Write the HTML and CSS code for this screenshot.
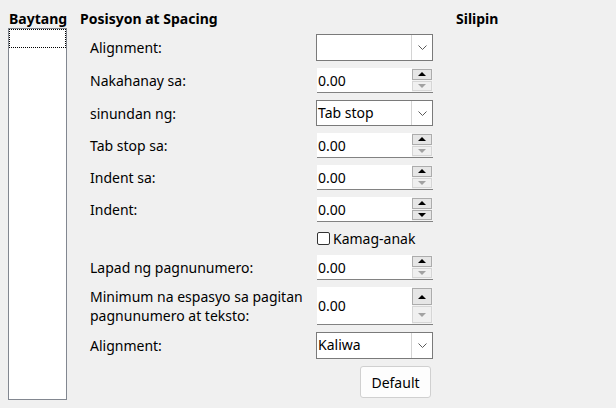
FILE: index.html
```html
<!DOCTYPE html>
<html>
<head>
<meta charset="utf-8">
<link rel="stylesheet" href="styles.css">
</head>
<body>
<div class="dialog">
  <div class="col-levels">
    <div class="head">Baytang</div>
    <div class="levels"><div class="level-focus"></div></div>
  </div>
  <div class="col-main">
    <div class="head">Posisyon at Spacing</div>
    <div class="form">
      <div class="label">Alignment:</div>
      <div class="combo h27"><span class="val"></span><span class="drop"><svg width="9" height="5" viewBox="0 0 9 5"><polyline points="0.5,0.5 4.5,4.5 8.5,0.5" fill="none" stroke="#5a5a5a" stroke-width="1"/></svg></span></div>

      <div class="label">Nakahanay sa:</div>
      <div class="spin"><span class="val">0.00</span><span class="btns"><span class="up"></span><span class="down off"></span></span></div>

      <div class="label">sinundan ng:</div>
      <div class="combo h26"><span class="val">Tab stop</span><span class="drop"><svg width="9" height="5" viewBox="0 0 9 5"><polyline points="0.5,0.5 4.5,4.5 8.5,0.5" fill="none" stroke="#5a5a5a" stroke-width="1"/></svg></span></div>

      <div class="label">Tab stop sa:</div>
      <div class="spin"><span class="val">0.00</span><span class="btns"><span class="up"></span><span class="down off"></span></span></div>

      <div class="label">Indent sa:</div>
      <div class="spin"><span class="val">0.00</span><span class="btns"><span class="up"></span><span class="down off"></span></span></div>

      <div class="label">Indent:</div>
      <div class="spin"><span class="val">0.00</span><span class="btns"><span class="up"></span><span class="down"></span></span></div>

      <div class="label"></div>
      <label class="check"><span class="box"></span>Kamag-anak</label>

      <div class="label">Lapad ng pagnunumero:</div>
      <div class="spin"><span class="val">0.00</span><span class="btns"><span class="up"></span><span class="down off"></span></span></div>

      <div class="label two">Minimum na espasyo sa pagitan<br>pagnunumero at teksto:</div>
      <div class="spin tall"><span class="val">0.00</span><span class="btns"><span class="up"></span><span class="down off"></span></span></div>

      <div class="label">Alignment:</div>
      <div class="combo h27"><span class="val">Kaliwa</span><span class="drop"><svg width="9" height="5" viewBox="0 0 9 5"><polyline points="0.5,0.5 4.5,4.5 8.5,0.5" fill="none" stroke="#5a5a5a" stroke-width="1"/></svg></span></div>

      <div class="label"></div>
      <div class="btn-row"><button class="btn">Default</button></div>
    </div>
  </div>
  <div class="col-preview">
    <div class="head">Silipin</div>
  </div>
</div>
</body>
</html>
```

FILE: styles.css
```css
html, body {
  margin: 0;
  padding: 0;
  background: #f0f0f0;
}
body {
  font-family: "Noto Sans", "Open Sans", sans-serif;
  font-size: 14px;
  color: #000;
  width: 616px;
  height: 408px;
  overflow: hidden;
}
.dialog {
  display: flex;
  padding: 10px 0 0 8px;
}
.head {
  font-weight: bold;
  height: 18px;
  line-height: 18px;
  padding-left: 1px;
  white-space: nowrap;
}
.col-levels {
  width: 59px;
  display: flex;
  flex-direction: column;
}
.levels {
  box-sizing: border-box;
  width: 59px;
  height: 372px;
  background: #fff;
  border: 1px solid #828790;
  padding: 0;
}
.level-focus {
  height: 19px;
  border: 1px dotted #000;
  box-sizing: border-box;
}
.col-main {
  margin-left: 12px;
  width: 354px;
}
.form {
  margin-top: 6px;
  padding-left: 11px;
  display: grid;
  grid-template-columns: 226px 117px;
  row-gap: 7px;
  align-items: center;
}
.label {
  white-space: nowrap;
  line-height: 19px;
}
.combo {
  box-sizing: border-box;
  border: 1px solid #7a7a7a;
  background: #fff;
  display: flex;
  align-items: stretch;
}
.h27 { height: 27px; }
.h26 { height: 26px; }
.combo .val {
  flex: 1;
  padding-left: 1px;
  line-height: 24px;
}
.drop {
  width: 21px;
  box-sizing: border-box;
  border-left: 1px solid #d4d4d4;
  display: flex;
  align-items: center;
  justify-content: center;
  background: #fff;
}
.spin {
  box-sizing: border-box;
  height: 25px;
  background: #fff;
  border-bottom: 1px solid #828282;
  display: flex;
  margin-left: 1px;
}
.spin.tall { height: 38px; }
.spin .val {
  flex: 1;
  padding-left: 1px;
  display: flex;
  align-items: center;
}
.btns {
  width: 21px;
  background: #f3f3f3;
  display: flex;
  flex-direction: column;
  padding: 1px 1px 1px 0;
  gap: 1px;
  box-sizing: border-box;
}
.up, .down {
  flex: 1;
  box-sizing: border-box;
  border: 1px solid #acacac;
  background: #e6e6e6;
  position: relative;
}
.up::after, .down::after {
  content: "";
  position: absolute;
  left: 50%;
  top: 50%;
  margin-left: -4px;
  border-left: 4px solid transparent;
  border-right: 4px solid transparent;
}
.up::after {
  margin-top: -2px;
  border-bottom: 4px solid #000;
}
.down::after {
  margin-top: -2px;
  border-top: 4px solid #000;
}
.down.off {
  border-color: #d6d6d6;
  background: #f0f0f0;
}
.down.off::after {
  border-top-color: #a2a2a2;
}
.check {
  height: 19px;
  display: flex;
  align-items: center;
  gap: 3px;
  margin-left: 1px;
}
.box {
  width: 11px;
  height: 11px;
  border: 1px solid #333;
  border-radius: 2px;
  background: #fff;
}
.btn-row {
  display: flex;
  justify-content: flex-end;
  padding-right: 2px;
}
.btn {
  font-family: inherit;
  font-size: 14px;
  color: #000;
  width: 71px;
  height: 32px;
  background: #fdfdfd;
  border: 1px solid #d0d0d0;
  border-radius: 3px;
  padding: 0;
}
.col-preview {
  margin-left: 22px;
}
```
